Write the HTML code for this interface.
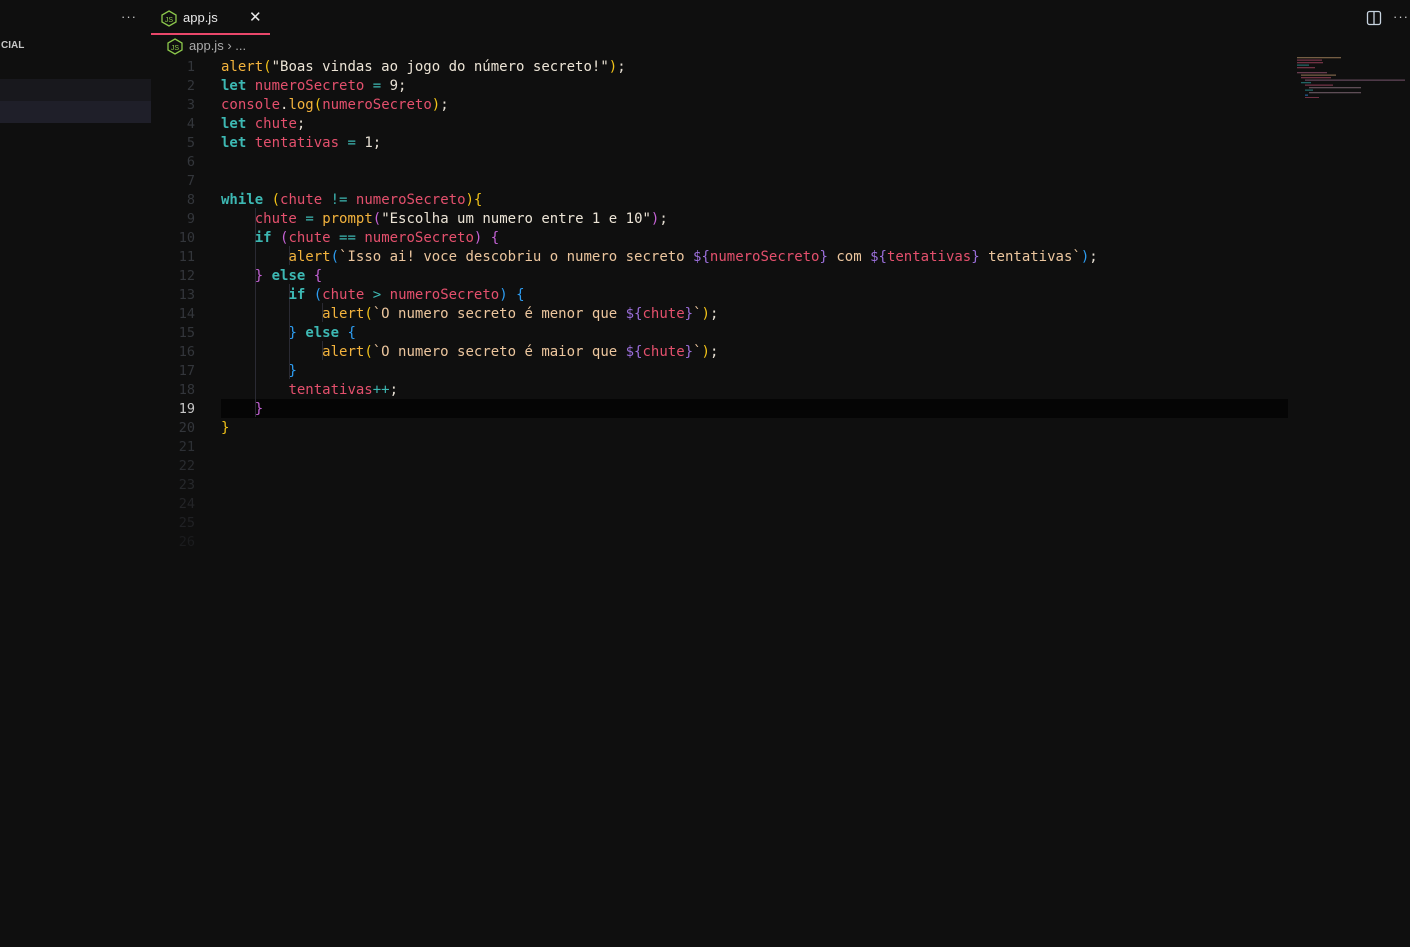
<!DOCTYPE html>
<html><head><meta charset="utf-8"><style>
html,body{margin:0;padding:0;background:#0f0f0f;width:1410px;height:947px;overflow:hidden;font-family:"Liberation Sans",sans-serif;}
.abs{position:absolute}
.code{position:absolute;left:221px;font-family:"DejaVu Sans Mono","Liberation Mono",monospace;font-size:14px;line-height:19px;white-space:pre;color:#e6dfd3;}
.ln{position:absolute;left:160px;width:35px;text-align:right;font-family:"DejaVu Sans Mono",monospace;font-size:13.5px;line-height:19px;color:#33363b;}
.k{color:#3db8b3;font-weight:bold}
.v{color:#e4506d}
.f{color:#f3b33d}
.s{color:#ece4d6}
.t{color:#ecc69e}
.p1{color:#f2c318}
.p2{color:#c562d6}
.p3{color:#2d9cf0}
.d{color:#9a6ed9}
.o{color:#3db8b3}
.g{position:absolute;width:1px;background:#2a2a33}
</style></head><body>
<div class="abs" style="left:0;top:79px;width:151px;height:22px;background:#18181d"></div>
<div class="abs" style="left:0;top:101px;width:151px;height:22px;background:#1f1f29"></div>
<div class="abs" style="left:1px;top:40px;font-size:10px;font-weight:bold;color:#c8c8c8">CIAL</div>
<div class="abs" style="left:121px;top:9px;font-size:13px;color:#ccc;letter-spacing:1px">···</div>
<div class="abs" style="left:151px;top:33px;width:119px;height:2px;background:#e9476a"></div>
<svg class="abs" style="left:161px;top:10px" width="16" height="17" viewBox="0 0 16 17"><polygon points="8,1 15,5 15,12 8,16 1,12 1,5" fill="none" stroke="#8cc84b" stroke-width="1.3"/><text x="8" y="12" font-size="7" fill="#8cc84b" text-anchor="middle" font-family="Liberation Sans">JS</text></svg>
<div class="abs" style="left:183px;top:10px;font-size:13px;color:#e8e8e8">app.js</div>
<div class="abs" style="left:249px;top:8px;font-size:15px;color:#e8e8e8">✕</div>
<svg class="abs" style="left:167px;top:38px" width="16" height="17" viewBox="0 0 16 17"><polygon points="8,1 15,5 15,12 8,16 1,12 1,5" fill="none" stroke="#8cc84b" stroke-width="1.3"/><text x="8" y="12" font-size="7" fill="#8cc84b" text-anchor="middle" font-family="Liberation Sans">JS</text></svg>
<div class="abs" style="left:189px;top:38px;font-size:13px;color:#aaa">app.js <span style="color:#aaa">›</span> ...</div>
<svg class="abs" style="left:1366px;top:10px" width="16" height="16" viewBox="0 0 16 16"><rect x="1.5" y="1.5" width="13" height="13" rx="2" fill="none" stroke="#c8d4e0" stroke-width="1.3"/><line x1="8" y1="2" x2="8" y2="14" stroke="#c8d4e0" stroke-width="1.3"/></svg>
<div class="abs" style="left:1393px;top:9px;font-size:13px;color:#ccc;letter-spacing:1px">···</div>
<svg class="abs" style="left:1296px;top:56px" width="112" height="42">
<g opacity="0.55">
<rect x="1" y="1" width="44" height="1.3" fill="#c9a070"/><rect x="1" y="3.5" width="25" height="1.3" fill="#c05070"/><rect x="1" y="6" width="26" height="1.3" fill="#c05070"/><rect x="1" y="8.5" width="12" height="1.3" fill="#3aa"/><rect x="1" y="11" width="18" height="1.3" fill="#c05070"/>
<rect x="1" y="16" width="30" height="1.3" fill="#b06080"/><rect x="5" y="18.5" width="35" height="1.3" fill="#c9a070"/><rect x="5" y="21" width="30" height="1.3" fill="#c05070"/><rect x="9" y="23.5" width="100" height="1.3" fill="#a07090"/><rect x="5" y="26" width="10" height="1.3" fill="#3aa"/><rect x="9" y="28.5" width="28" height="1.3" fill="#c05070"/><rect x="13" y="31" width="52" height="1.3" fill="#a08090"/><rect x="9" y="33.5" width="8" height="1.3" fill="#3aa"/><rect x="13" y="36" width="52" height="1.3" fill="#a08090"/><rect x="9" y="38.5" width="3" height="1.3" fill="#39f"/><rect x="9" y="41" width="14" height="1.3" fill="#c05070"/>
</g></svg>
<div class="abs" style="left:221px;top:399px;width:1067px;height:19px;background:#050505"></div>
<div class="g" style="left:255px;top:208px;height:209px"></div>
<div class="g" style="left:289px;top:246px;height:19px"></div>
<div class="g" style="left:289px;top:284px;height:95px"></div>
<div class="g" style="left:322px;top:303px;height:19px"></div>
<div class="g" style="left:322px;top:341px;height:19px"></div>
<div class="ln" style="top:58px">1<br>2<br>3<br>4<br>5<br>6<br>7<br>8<br>9<br>10<br>11<br>12<br>13<br>14<br>15<br>16<br>17<br>18<br><span style="color:#c6c6c6">19</span><br>20<br><span style="color:#2d3035">21</span><br><span style="color:#292b2f">22</span><br><span style="color:#26282b">23</span><br><span style="color:#232427">24</span><br><span style="color:#202124">25</span><br><span style="color:#1b1c1e">26</span></div>
<div class="code" style="top:58px"><span class="f">alert</span><span class="p1">(</span><span class="s">"Boas vindas ao jogo do número secreto!"</span><span class="p1">)</span>;
<span class="k">let</span> <span class="v">numeroSecreto</span> <span class="o">=</span> 9;
<span class="v">console</span>.<span class="f">log</span><span class="p1">(</span><span class="v">numeroSecreto</span><span class="p1">)</span>;
<span class="k">let</span> <span class="v">chute</span>;
<span class="k">let</span> <span class="v">tentativas</span> <span class="o">=</span> 1;


<span class="k">while</span> <span class="p1">(</span><span class="v">chute</span> <span class="o">!=</span> <span class="v">numeroSecreto</span><span class="p1">){</span>
    <span class="v">chute</span> <span class="o">=</span> <span class="f">prompt</span><span class="p2">(</span><span class="s">"Escolha um numero entre 1 e 10"</span><span class="p2">)</span>;
    <span class="k">if</span> <span class="p2">(</span><span class="v">chute</span> <span class="o">==</span> <span class="v">numeroSecreto</span><span class="p2">)</span> <span class="p2">{</span>
        <span class="f">alert</span><span class="p3">(</span><span class="t">`Isso ai! voce descobriu o numero secreto </span><span class="d">${</span><span class="v">numeroSecreto</span><span class="d">}</span><span class="t"> com </span><span class="d">${</span><span class="v">tentativas</span><span class="d">}</span><span class="t"> tentativas`</span><span class="p3">)</span>;
    <span class="p2">}</span> <span class="k">else</span> <span class="p2">{</span>
        <span class="k">if</span> <span class="p3">(</span><span class="v">chute</span> <span class="o">&gt;</span> <span class="v">numeroSecreto</span><span class="p3">)</span> <span class="p3">{</span>
            <span class="f">alert</span><span class="p1">(</span><span class="t">`O numero secreto é menor que </span><span class="d">${</span><span class="v">chute</span><span class="d">}</span><span class="t">`</span><span class="p1">)</span>;
        <span class="p3">}</span> <span class="k">else</span> <span class="p3">{</span>
            <span class="f">alert</span><span class="p1">(</span><span class="t">`O numero secreto é maior que </span><span class="d">${</span><span class="v">chute</span><span class="d">}</span><span class="t">`</span><span class="p1">)</span>;
        <span class="p3">}</span>
        <span class="v">tentativas</span><span class="o">++</span>;
    <span class="p2">}</span>
<span class="p1">}</span></div>
</body></html>
